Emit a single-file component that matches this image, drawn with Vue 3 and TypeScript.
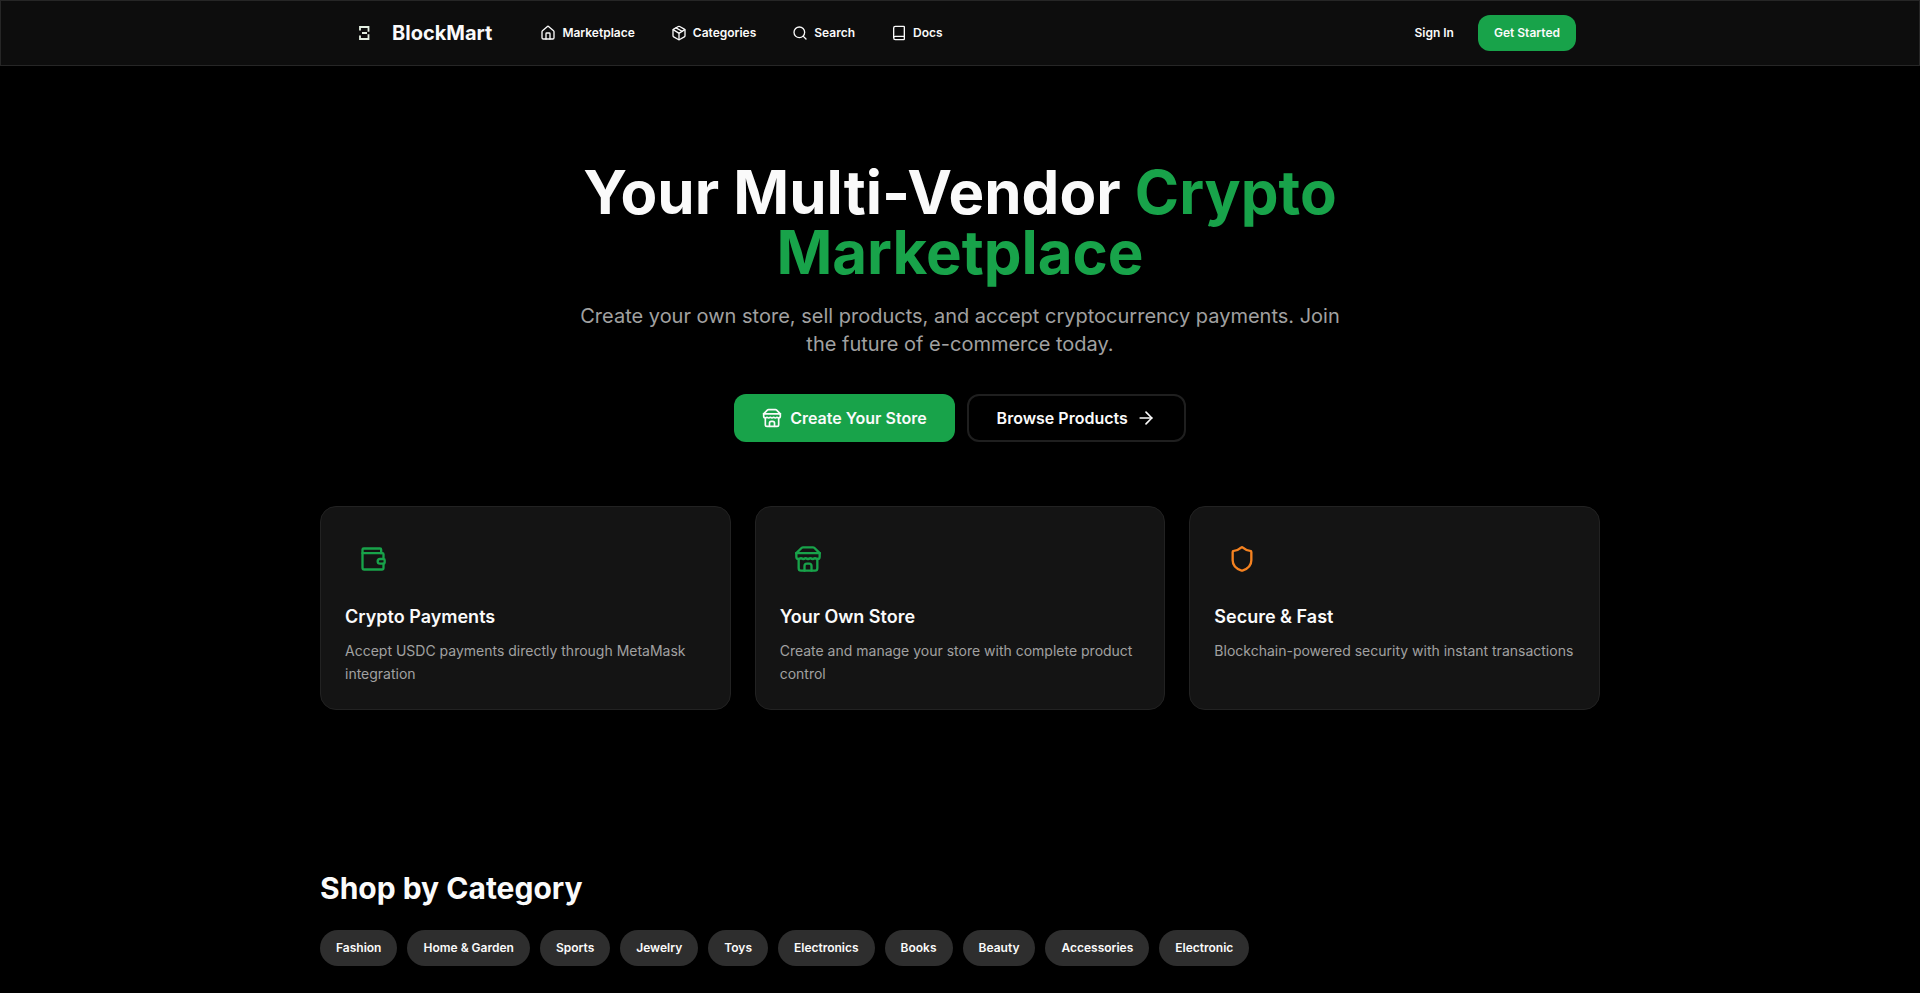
<script setup lang="ts">
interface NavLink {
  label: string
  paths: string[]
}

interface Feature {
  title: string
  text: string
  tone: 'green' | 'orange'
  paths: string[]
}

const storePaths: string[] = [
  'm2 7 4.41-4.41A2 2 0 0 1 7.83 2h8.34a2 2 0 0 1 1.42.59L22 7',
  'M4 12v8a2 2 0 0 0 2 2h12a2 2 0 0 0 2-2v-8',
  'M15 22v-4a2 2 0 0 0-2-2h-2a2 2 0 0 0-2 2v4',
  'M2 7h20',
  'M22 7v3a2 2 0 0 1-2 2a2.7 2.7 0 0 1-1.59-.63.7.7 0 0 0-.82 0A2.7 2.7 0 0 1 16 12a2.7 2.7 0 0 1-1.59-.63.7.7 0 0 0-.82 0A2.7 2.7 0 0 1 12 12a2.7 2.7 0 0 1-1.59-.63.7.7 0 0 0-.82 0A2.7 2.7 0 0 1 8 12a2.7 2.7 0 0 1-1.59-.63.7.7 0 0 0-.82 0A2.7 2.7 0 0 1 4 12a2 2 0 0 1-2-2V7',
]

const navLinks: NavLink[] = [
  {
    label: 'Marketplace',
    paths: [
      'M15 21v-8a1 1 0 0 0-1-1h-4a1 1 0 0 0-1 1v8',
      'M3 10a2 2 0 0 1 .709-1.528l7-5.999a2 2 0 0 1 2.582 0l7 5.999A2 2 0 0 1 21 10v9a2 2 0 0 1-2 2H5a2 2 0 0 1-2-2z',
    ],
  },
  {
    label: 'Categories',
    paths: [
      'M11 21.73a2 2 0 0 0 2 0l7-4A2 2 0 0 0 21 16V8a2 2 0 0 0-1-1.73l-7-4a2 2 0 0 0-2 0l-7 4A2 2 0 0 0 3 8v8a2 2 0 0 0 1 1.73z',
      'M12 22V12',
      'm3.3 7 7.703 4.734a2 2 0 0 0 1.994 0L20.7 7',
      'm7.5 4.27 9 5.15',
    ],
  },
  {
    label: 'Search',
    paths: ['M3 11a8 8 0 1 0 16 0a8 8 0 1 0-16 0', 'm21 21-4.3-4.3'],
  },
  {
    label: 'Docs',
    paths: ['M4 19.5v-15A2.5 2.5 0 0 1 6.5 2H19a1 1 0 0 1 1 1v18a1 1 0 0 1-1 1H6.5a1 1 0 0 1 0-5H20'],
  },
]

const features: Feature[] = [
  {
    title: 'Crypto Payments',
    text: 'Accept USDC payments directly through MetaMask integration',
    tone: 'green',
    paths: [
      'M19 7V4a1 1 0 0 0-1-1H4a1 1 0 0 0-1 1v15.5A1.5 1.5 0 0 0 4.500 21H20a1 1 0 0 0 1-1v-4',
      'M3 7h17a1 1 0 0 1 1 1v4h-3a2 2 0 0 0 0 4h3a1 1 0 0 0 1-1v-2a1 1 0 0 0-1-1',
    ],
  },
  {
    title: 'Your Own Store',
    text: 'Create and manage your store with complete product control',
    tone: 'green',
    paths: storePaths,
  },
  {
    title: 'Secure & Fast',
    text: 'Blockchain-powered security with instant transactions',
    tone: 'orange',
    paths: [
      'M20 13c0 5-3.5 7.5-7.66 8.95a1 1 0 0 1-.67-.01C7.5 20.5 4 18 4 13V6a1 1 0 0 1 1-1c2 0 4.5-1.2 6.24-2.72a1.17 1.17 0 0 1 1.52 0C14.51 3.81 17 5 19 5a1 1 0 0 1 1 1z',
    ],
  },
]

const categories: string[] = [
  'Fashion',
  'Home & Garden',
  'Sports',
  'Jewelry',
  'Toys',
  'Electronics',
  'Books',
  'Beauty',
  'Accessories',
  'Electronic',
]
</script>

<template>
  <div class="page">
    <header class="topbar">
      <div class="topbar-inner">
        <a class="brand" href="#">
          <svg class="brand-mark" viewBox="0 0 40 40" aria-hidden="true">
            <path d="M16 17.500V14h8.500v4.800M24.500 21.200V26H16v-3.500M18 20h5" />
          </svg>
          <span>BlockMart</span>
        </a>
        <nav class="nav" aria-label="Main">
          <a v-for="link in navLinks" :key="link.label" class="nav-link" href="#">
            <svg class="icon icon-nav" viewBox="0 0 24 24" aria-hidden="true">
              <path v-for="d in link.paths" :key="d" :d="d" />
            </svg>
            <span>{{ link.label }}</span>
          </a>
        </nav>
        <div class="account">
          <a class="sign-in" href="#">Sign In</a>
          <button class="get-started" type="button">Get Started</button>
        </div>
      </div>
    </header>

    <main class="content">
      <section class="hero">
        <h1 class="hero-title">
          Your Multi-Vendor <span class="accent">Crypto</span> <span class="accent">Marketplace</span>
        </h1>
        <p class="hero-text">
          Create your own store, sell products, and accept cryptocurrency payments. Join the future of
          e-commerce today.
        </p>
        <div class="actions">
          <button class="action primary" type="button">
            <svg class="icon icon-action" viewBox="0 0 24 24" aria-hidden="true">
              <path v-for="d in storePaths" :key="d" :d="d" />
            </svg>
            <span>Create Your Store</span>
          </button>
          <button class="action outline" type="button">
            <span>Browse Products</span>
            <svg class="icon icon-action" viewBox="0 0 24 24" aria-hidden="true">
              <path d="M5 12h14" />
              <path d="m12 5 7 7-7 7" />
            </svg>
          </button>
        </div>
      </section>

      <section class="features">
        <article v-for="feature in features" :key="feature.title" class="card">
          <div class="card-icon" :class="feature.tone">
            <svg class="icon" viewBox="0 0 24 24" aria-hidden="true">
              <path v-for="d in feature.paths" :key="d" :d="d" />
            </svg>
          </div>
          <h3 class="card-title">{{ feature.title }}</h3>
          <p class="card-text">{{ feature.text }}</p>
        </article>
      </section>

      <section class="shop">
        <h2 class="shop-title">Shop by Category</h2>
        <div class="chips">
          <button v-for="name in categories" :key="name" class="chip" type="button">{{ name }}</button>
        </div>
      </section>
    </main>
  </div>
</template>

<style>
body {
  margin: 0;
  background: #000;
}
</style>

<style scoped>
.page {
  min-height: 100vh;
  box-sizing: border-box;
  padding-bottom: 27px;
  background: #000;
  color: #fafafa;
  font-family: Inter, 'Liberation Sans', sans-serif;
  font-size: 16px;
}

.page *,
.page *::before {
  box-sizing: border-box;
}

a {
  color: inherit;
  text-decoration: none;
}

button {
  border: 0;
  color: inherit;
  font-family: inherit;
  cursor: pointer;
}

h1,
h2,
h3,
p {
  margin: 0;
}

.icon {
  display: block;
  flex: none;
  width: 28px;
  height: 28px;
  fill: none;
  stroke: currentColor;
  stroke-width: 2;
  stroke-linecap: round;
  stroke-linejoin: round;
}

.topbar {
  border: 1px solid #262626;
  background: #0d0d0d;
}

.topbar-inner {
  display: flex;
  align-items: center;
  max-width: 1280px;
  height: 64px;
  margin: 0 auto;
  padding: 0 24px;
}

.brand {
  display: flex;
  align-items: center;
  gap: 8px;
  font-size: 20px;
  font-weight: 700;
  line-height: 28px;
}

.brand-mark {
  width: 40px;
  height: 40px;
  fill: none;
  stroke: #e4efe2;
  stroke-width: 1.8;
}

.nav {
  display: flex;
  gap: 36px;
  margin-left: 48px;
}

.nav-link {
  display: flex;
  align-items: center;
  gap: 6px;
  font-size: 12px;
  font-weight: 600;
  line-height: 16px;
}

.icon-nav {
  width: 16px;
  height: 16px;
}

.account {
  display: flex;
  align-items: center;
  gap: 24px;
  margin-left: auto;
  font-size: 12px;
  font-weight: 600;
  line-height: 16px;
}

.get-started {
  padding: 10px 16px;
  border-radius: 12px;
  background: #18a34a;
  font-size: 12px;
  font-weight: 600;
  line-height: 16px;
}

.content {
  max-width: 1280px;
  margin: 0 auto;
}

.hero {
  display: flex;
  flex-direction: column;
  align-items: center;
  padding-top: 96px;
  text-align: center;
}

.hero-title {
  max-width: 800px;
  font-size: 60px;
  font-weight: 700;
  line-height: 60px;
}

.accent {
  color: #18a34a;
}

.hero-text {
  max-width: 768px;
  margin-top: 20px;
  color: #a1a1a1;
  font-size: 20px;
  line-height: 28px;
}

.actions {
  display: flex;
  gap: 12px;
  margin-top: 36px;
}

.action {
  display: flex;
  align-items: center;
  gap: 8px;
  height: 48px;
  padding: 0 28px;
  border-radius: 12px;
  font-size: 16px;
  font-weight: 600;
}

.primary {
  background: #18a34a;
}

.outline {
  border: 2px solid #1f1f1f;
  background: #000;
}

.icon-action {
  width: 20px;
  height: 20px;
}

.features {
  display: grid;
  grid-template-columns: repeat(3, 1fr);
  gap: 24px;
  margin-top: 64px;
}

.card {
  padding: 24px;
  border: 1px solid #222;
  border-radius: 16px;
  background: #141414;
}

.card-icon {
  display: grid;
  place-items: center;
  width: 56px;
  height: 56px;
}

.green {
  color: #18a34a;
}

.orange {
  color: #f58220;
}

.card-title {
  margin-top: 16px;
  font-size: 18px;
  font-weight: 600;
  line-height: 28px;
}

.card-text {
  margin-top: 8px;
  color: #a1a1a1;
  font-size: 14px;
  line-height: 23px;
}

.shop {
  margin-top: 160px;
}

.shop-title {
  font-size: 30px;
  font-weight: 700;
  line-height: 36px;
}

.chips {
  display: flex;
  flex-wrap: wrap;
  gap: 10px;
  margin-top: 24px;
}

.chip {
  padding: 10px 16px;
  border-radius: 18px;
  background: #2e2e2e;
  font-size: 12px;
  font-weight: 600;
  line-height: 16px;
}
</style>
